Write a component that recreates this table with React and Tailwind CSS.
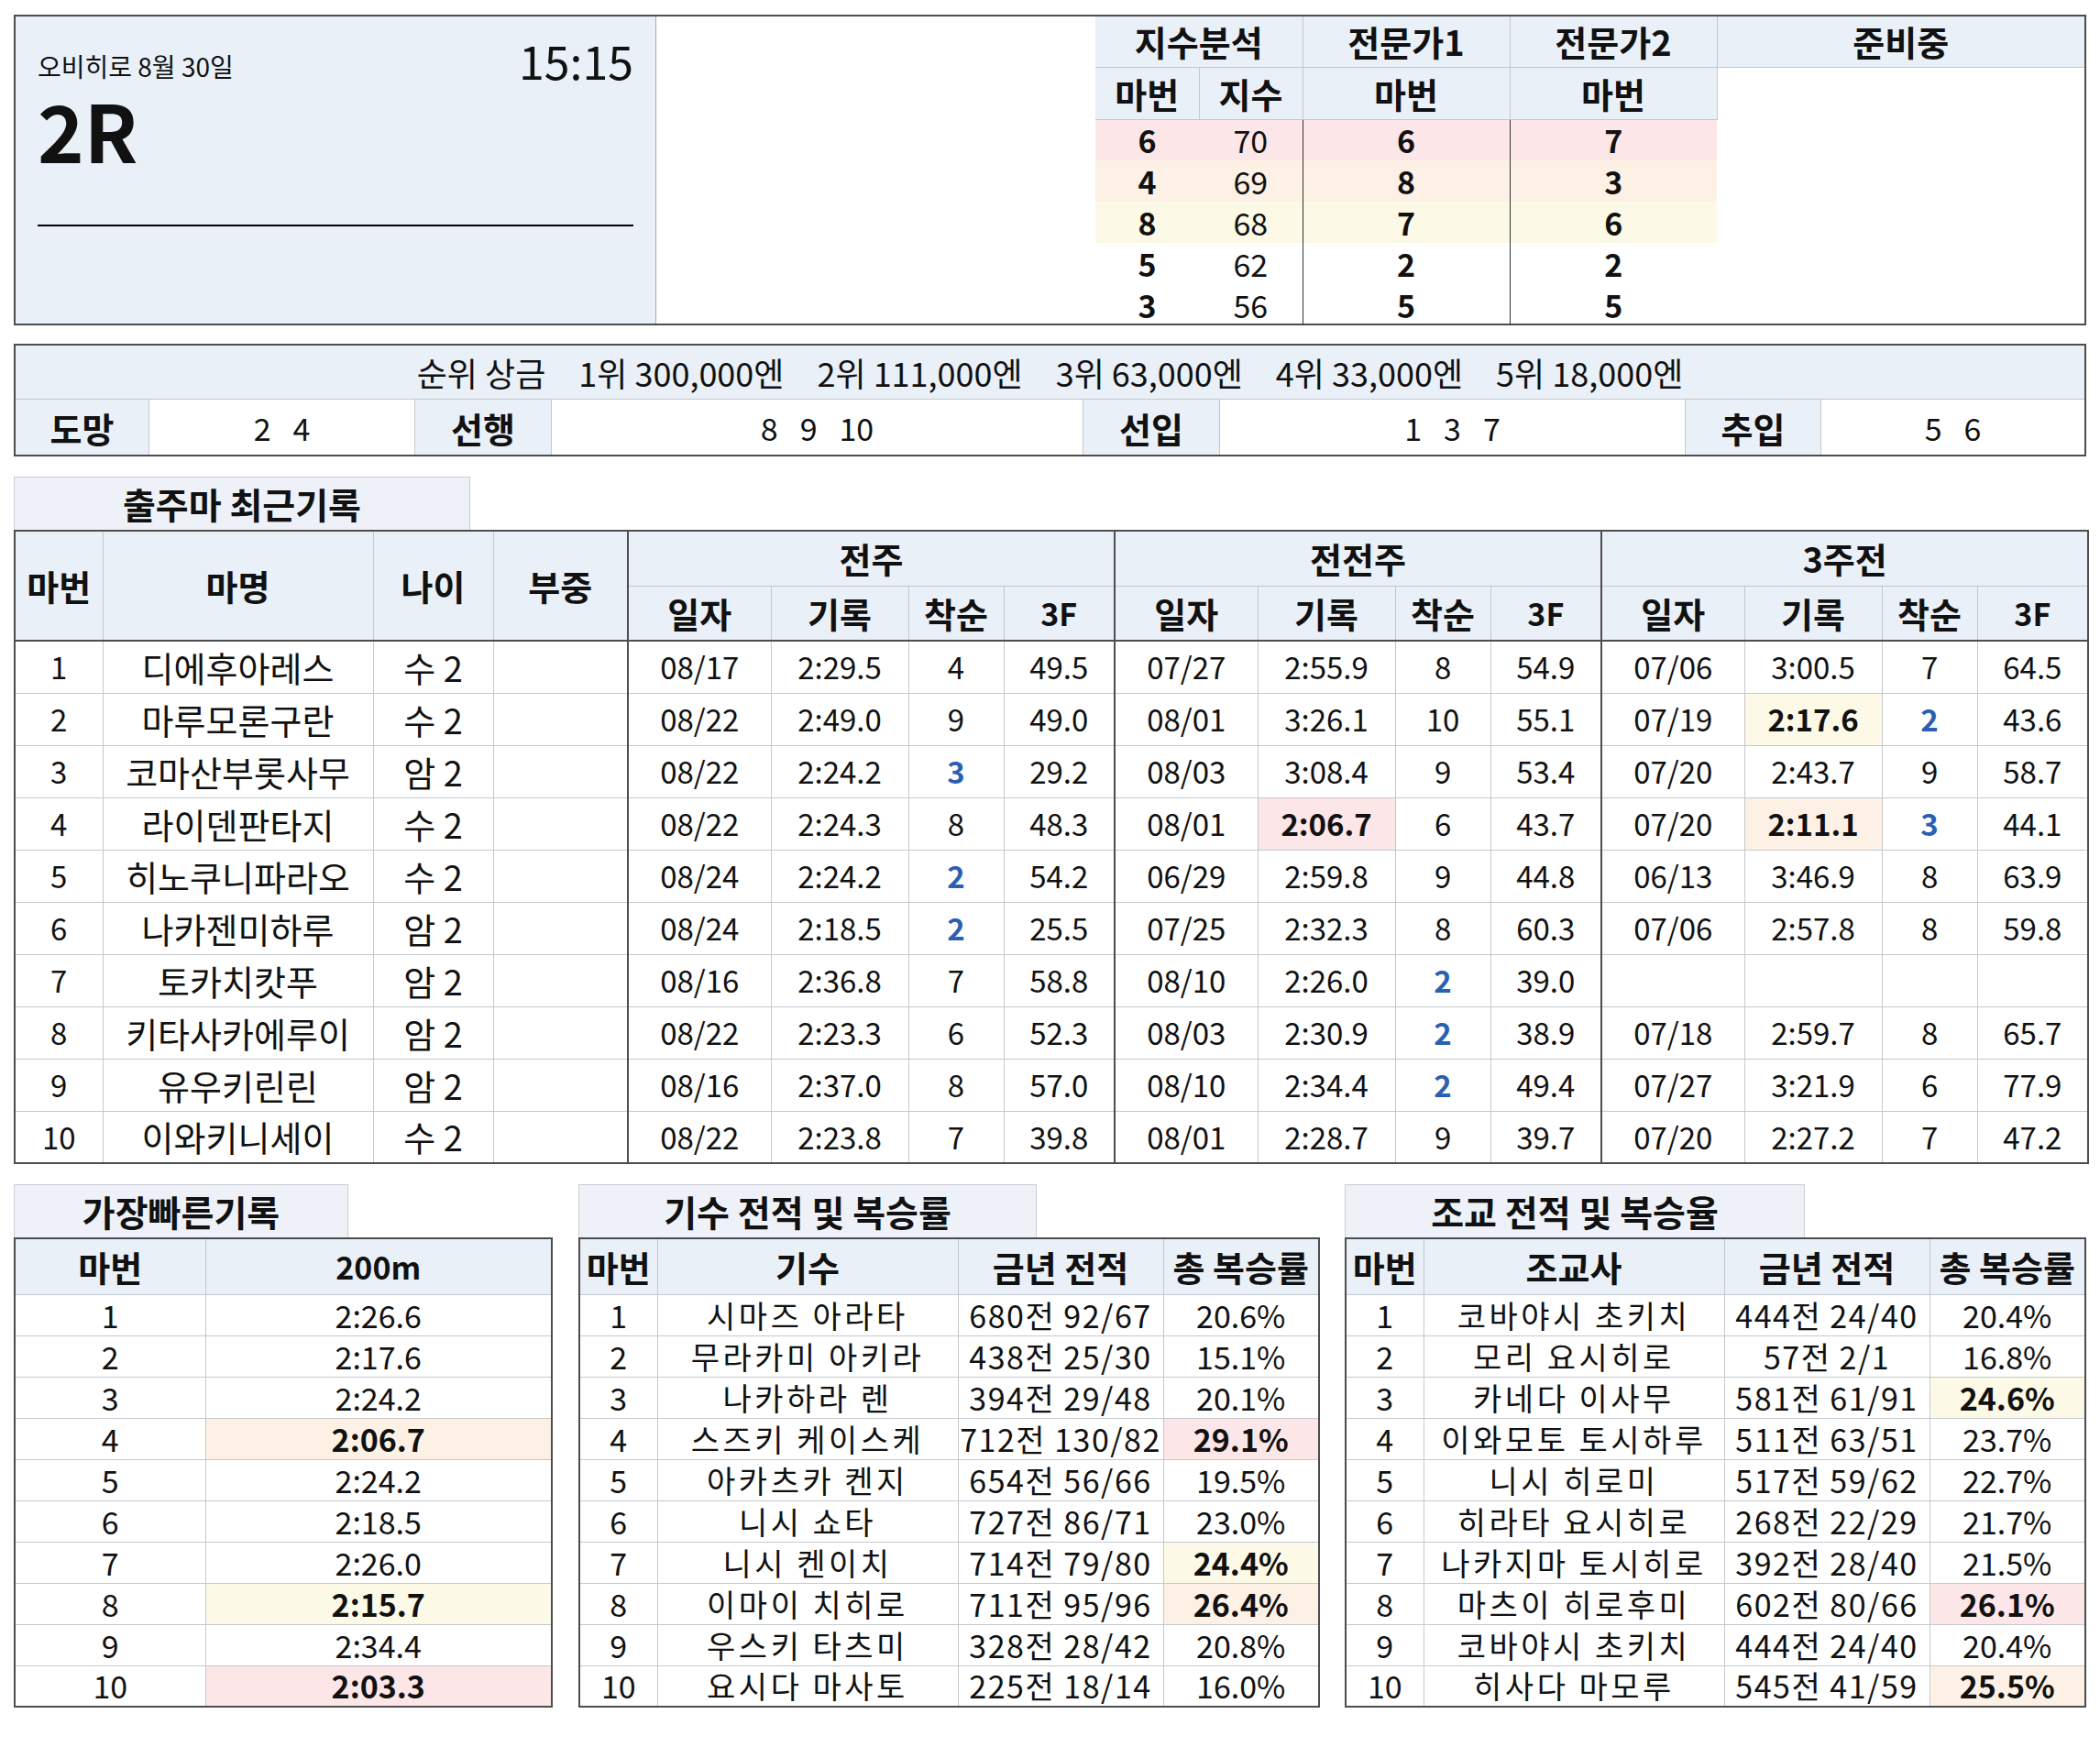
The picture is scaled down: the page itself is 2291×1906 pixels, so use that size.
import React from "react";

const HL = { p: "bg-[#fce6e7]", o: "bg-[#fdf1e5]", y: "bg-[#fdf9e7]" };

const recent = [
  { no: 1, name: "디에후아레스", age: "수 2", runs: [["08/17", "2:29.5", "4", "49.5"], ["07/27", "2:55.9", "8", "54.9"], ["07/06", "3:00.5", "7", "64.5"]] },
  { no: 2, name: "마루모론구란", age: "수 2", runs: [["08/22", "2:49.0", "9", "49.0"], ["08/01", "3:26.1", "10", "55.1"], ["07/19", "2:17.6", "2", "43.6", "y"]] },
  { no: 3, name: "코마산부롯사무", age: "암 2", runs: [["08/22", "2:24.2", "3", "29.2"], ["08/03", "3:08.4", "9", "53.4"], ["07/20", "2:43.7", "9", "58.7"]] },
  { no: 4, name: "라이덴판타지", age: "수 2", runs: [["08/22", "2:24.3", "8", "48.3"], ["08/01", "2:06.7", "6", "43.7", "p"], ["07/20", "2:11.1", "3", "44.1", "o"]] },
  { no: 5, name: "히노쿠니파라오", age: "수 2", runs: [["08/24", "2:24.2", "2", "54.2"], ["06/29", "2:59.8", "9", "44.8"], ["06/13", "3:46.9", "8", "63.9"]] },
  { no: 6, name: "나카젠미하루", age: "암 2", runs: [["08/24", "2:18.5", "2", "25.5"], ["07/25", "2:32.3", "8", "60.3"], ["07/06", "2:57.8", "8", "59.8"]] },
  { no: 7, name: "토카치캇푸", age: "암 2", runs: [["08/16", "2:36.8", "7", "58.8"], ["08/10", "2:26.0", "2", "39.0"], ["", "", "", ""]] },
  { no: 8, name: "키타사카에루이", age: "암 2", runs: [["08/22", "2:23.3", "6", "52.3"], ["08/03", "2:30.9", "2", "38.9"], ["07/18", "2:59.7", "8", "65.7"]] },
  { no: 9, name: "유우키린린", age: "암 2", runs: [["08/16", "2:37.0", "8", "57.0"], ["08/10", "2:34.4", "2", "49.4"], ["07/27", "3:21.9", "6", "77.9"]] },
  { no: 10, name: "이와키니세이", age: "수 2", runs: [["08/22", "2:23.8", "7", "39.8"], ["08/01", "2:28.7", "9", "39.7"], ["07/20", "2:27.2", "7", "47.2"]] },
];

const fastest = [
  ["2:26.6"], ["2:17.6"], ["2:24.2"], ["2:06.7", "o"], ["2:24.2"],
  ["2:18.5"], ["2:26.0"], ["2:15.7", "y"], ["2:34.4"], ["2:03.3", "p"],
];

const jockeys = [
  ["시마즈 아라타", "680전 92/67", "20.6%"],
  ["무라카미 아키라", "438전 25/30", "15.1%"],
  ["나카하라 렌", "394전 29/48", "20.1%"],
  ["스즈키 케이스케", "712전 130/82", "29.1%", "p"],
  ["아카츠카 켄지", "654전 56/66", "19.5%"],
  ["니시 쇼타", "727전 86/71", "23.0%"],
  ["니시 켄이치", "714전 79/80", "24.4%", "y"],
  ["이마이 치히로", "711전 95/96", "26.4%", "o"],
  ["우스키 타츠미", "328전 28/42", "20.8%"],
  ["요시다 마사토", "225전 18/14", "16.0%"],
];

const trainers = [
  ["코바야시 초키치", "444전 24/40", "20.4%"],
  ["모리 요시히로", "57전 2/1", "16.8%"],
  ["카네다 이사무", "581전 61/91", "24.6%", "y"],
  ["이와모토 토시하루", "511전 63/51", "23.7%"],
  ["니시 히로미", "517전 59/62", "22.7%"],
  ["히라타 요시히로", "268전 22/29", "21.7%"],
  ["나카지마 토시히로", "392전 28/40", "21.5%"],
  ["마츠이 히로후미", "602전 80/66", "26.1%", "p"],
  ["코바야시 초키치", "444전 24/40", "20.4%"],
  ["히사다 마모루", "545전 41/59", "25.5%", "o"],
];

const picks = [
  { no: "6", idx: "70", e1: "6", e2: "7", hl: "p" },
  { no: "4", idx: "69", e1: "8", e2: "3", hl: "o" },
  { no: "8", idx: "68", e1: "7", e2: "6", hl: "y" },
  { no: "5", idx: "62", e1: "2", e2: "2" },
  { no: "3", idx: "56", e1: "5", e2: "5" },
];

// 한글은 원본 폰트보다 좁게 나와서 글자 크기를 조금 키움
const th = "border border-[#c4c8ce] bg-[#eaf0f7] font-bold text-center p-0 text-[38px]";
const td = "border border-[#c4c8ce] text-center p-0";
const ko = "text-[38px] whitespace-nowrap";
const gl = "border-l-2 border-l-[#4d4d4d]";

function Tab({ w, children }) {
  return (
    <div className={`${w} h-[58px] bg-[#eef2f8] border border-b-0 border-[#c9ced6] flex items-center justify-center font-bold text-[39px] leading-none`}>
      {children}
    </div>
  );
}

function Label({ w, children }) {
  return (
    <div className={`${w} shrink-0 bg-[#eaf0f7] border-r border-[#c4c8ce] flex items-center justify-center font-bold text-[38px]`}>
      {children}
    </div>
  );
}

function Value({ w, nums, last }) {
  return (
    <div className={`${w} shrink-0 ${last ? "" : "border-r border-[#c4c8ce]"} flex items-center justify-center gap-[24px] text-[34px]`}>
      {nums.map(n => <span key={n}>{n}</span>)}
    </div>
  );
}

function StatTable({ head, rows }) {
  return (
    <table className="w-full table-fixed border-collapse border-2 border-[#4d4d4d] text-[34px] leading-none">
      <colgroup>
        <col className="w-[85px]" />
        <col className="w-[328px]" />
        <col className="w-[224px]" />
        <col />
      </colgroup>
      <thead>
        <tr className="h-[61px]">
          {head.map(h => <th key={h} className={`${th} whitespace-nowrap`}>{h}</th>)}
        </tr>
      </thead>
      <tbody>
        {rows.map((r, i) => (
          <tr key={i} className="h-[45px]">
            <td className={td}>{i + 1}</td>
            <td className={`${td} whitespace-nowrap tracking-[3.5px]`}>{r[0]}</td>
            <td className={`${td} whitespace-nowrap tracking-[1.5px]`}>{r[1]}</td>
            <td className={`${td} ${r[3] ? HL[r[3]] + " font-bold" : ""}`}>{r[2]}</td>
          </tr>
        ))}
      </tbody>
    </table>
  );
}

export default function App() {
  return (
    <div className="w-[2291px] min-h-[1906px] bg-white px-[15px] pt-[16px] pb-[40px] font-['Noto_Sans_CJK_KR','Noto_Sans',sans-serif] text-[#111]">
      {/* 상단: 경주 정보 + 예상 */}
      <div className="flex h-[339px] border-2 border-[#4d4d4d]">
        <div className="w-[699px] shrink-0 bg-[#eaf0f7] border-r border-[#a9a9a9] px-[24px] pt-[22px]">
          <div className="flex items-start justify-between h-[50px]">
            <div className="text-[28px] leading-none mt-[18px]">오비히로 8월 30일</div>
            <div className="text-[50px] leading-none">15:15</div>
          </div>
          <div className="text-[86px] font-bold leading-[64px] mt-[19px]">2R</div>
          <div className="h-[2px] bg-black mt-[72px]" />
        </div>
        <div className="w-[479px] shrink-0 bg-white" />
        <table className="flex-1 table-fixed border-collapse text-[34px] leading-none">
          <colgroup>
            <col className="w-[113px]" />
            <col className="w-[113px]" />
            <col className="w-[226px]" />
            <col className="w-[226px]" />
            <col />
          </colgroup>
          <thead>
            <tr className="h-[55px]">
              <th colSpan={2} className={`${th} border-t-0 border-l-0`}>지수분석</th>
              <th className={`${th} border-t-0`}>전문가1</th>
              <th className={`${th} border-t-0`}>전문가2</th>
              <th className={`${th} border-t-0 border-r-0`}>준비중</th>
            </tr>
            <tr className="h-[57px]">
              <th className={`${th} border-l-0`}>마번</th>
              <th className={th}>지수</th>
              <th className={th}>마번</th>
              <th className={th}>마번</th>
              <td rowSpan={6} className="border-l border-l-[#333] border-t border-t-[#c4c8ce] bg-white" />
            </tr>
          </thead>
          <tbody>
            {picks.map((r, i) => (
              <tr key={i} className={`h-[45px] ${r.hl ? HL[r.hl] : ""}`}>
                <td className="text-center font-bold p-0">{r.no}</td>
                <td className="text-center p-0">{r.idx}</td>
                <td className="text-center font-bold p-0 border-l border-[#333]">{r.e1}</td>
                <td className="text-center font-bold p-0 border-l border-[#333]">{r.e2}</td>
              </tr>
            ))}
          </tbody>
        </table>
      </div>

      {/* 상금 / 각질 */}
      <div className="mt-[20px] border-2 border-[#4d4d4d]">
        <div className="h-[59px] bg-[#eaf0f7] border-b border-[#c4c8ce] flex items-center justify-center gap-[36px] text-[36px]">
          <span>순위 상금</span>
          <span>1위 300,000엔</span>
          <span>2위 111,000엔</span>
          <span>3위 63,000엔</span>
          <span>4위 33,000엔</span>
          <span>5위 18,000엔</span>
        </div>
        <div className="flex h-[60px]">
          <Label w="w-[146px]">도망</Label>
          <Value w="w-[290px]" nums={["2", "4"]} />
          <Label w="w-[149px]">선행</Label>
          <Value w="w-[580px]" nums={["8", "9", "10"]} />
          <Label w="w-[149px]">선입</Label>
          <Value w="w-[508px]" nums={["1", "3", "7"]} />
          <Label w="w-[148px]">추입</Label>
          <Value w="flex-1" nums={["5", "6"]} last />
        </div>
      </div>

      {/* 출주마 최근기록 */}
      <div className="mt-[22px]">
        <Tab w="w-[498px]">출주마 최근기록</Tab>
        <table className="w-full table-fixed border-collapse border-2 border-[#4d4d4d] text-[33px] leading-none">
          <colgroup>
            <col className="w-[96px]" />
            <col className="w-[295px]" />
            <col className="w-[131px]" />
            <col className="w-[147px]" />
            {[0, 1, 2].map(g => (
              <React.Fragment key={g}>
                <col className="w-[156px]" />
                <col className="w-[150px]" />
                <col className="w-[104px]" />
                <col className="w-[121px]" />
              </React.Fragment>
            ))}
          </colgroup>
          <thead>
            <tr className="h-[60px]">
              <th rowSpan={2} className={`${th} border-b-2 border-b-[#4d4d4d]`}>마번</th>
              <th rowSpan={2} className={`${th} border-b-2 border-b-[#4d4d4d]`}>마명</th>
              <th rowSpan={2} className={`${th} border-b-2 border-b-[#4d4d4d]`}>나이</th>
              <th rowSpan={2} className={`${th} border-b-2 border-b-[#4d4d4d]`}>부중</th>
              <th colSpan={4} className={`${th} ${gl}`}>전주</th>
              <th colSpan={4} className={`${th} ${gl}`}>전전주</th>
              <th colSpan={4} className={`${th} ${gl}`}>3주전</th>
            </tr>
            <tr className="h-[60px]">
              {[0, 1, 2].map(g => (
                <React.Fragment key={g}>
                  <th className={`${th} ${gl} border-b-2 border-b-[#4d4d4d]`}>일자</th>
                  <th className={`${th} border-b-2 border-b-[#4d4d4d]`}>기록</th>
                  <th className={`${th} border-b-2 border-b-[#4d4d4d]`}>착순</th>
                  <th className={`${th} border-b-2 border-b-[#4d4d4d] !text-[34px]`}>3F</th>
                </React.Fragment>
              ))}
            </tr>
          </thead>
          <tbody>
            {recent.map(h => (
              <tr key={h.no} className="h-[57px]">
                <td className={td}>{h.no}</td>
                <td className={`${td} ${ko}`}>{h.name}</td>
                <td className={`${td} ${ko}`}>{h.age}</td>
                <td className={td}></td>
                {h.runs.map((r, g) => (
                  <React.Fragment key={g}>
                    <td className={`${td} ${gl}`}>{r[0]}</td>
                    <td className={`${td} ${r[4] ? HL[r[4]] + " font-bold" : ""}`}>{r[1]}</td>
                    <td className={`${td} ${r[2] === "2" || r[2] === "3" ? "text-[#2b5fb4] font-bold" : ""}`}>{r[2]}</td>
                    <td className={td}>{r[3]}</td>
                  </React.Fragment>
                ))}
              </tr>
            ))}
          </tbody>
        </table>
      </div>

      {/* 하단 3개 표 */}
      <div className="mt-[22px] flex items-start">
        <div className="w-[588px] shrink-0">
          <Tab w="w-[365px]">가장빠른기록</Tab>
          <table className="w-full table-fixed border-collapse border-2 border-[#4d4d4d] text-[34px] leading-none">
            <colgroup>
              <col className="w-[208px]" />
              <col />
            </colgroup>
            <thead>
              <tr className="h-[61px]">
                <th className={th}>마번</th>
                <th className={`${th} !text-[34px]`}>200m</th>
              </tr>
            </thead>
            <tbody>
              {fastest.map((r, i) => (
                <tr key={i} className="h-[45px]">
                  <td className={td}>{i + 1}</td>
                  <td className={`${td} ${r[1] ? HL[r[1]] + " font-bold" : ""}`}>{r[0]}</td>
                </tr>
              ))}
            </tbody>
          </table>
        </div>
        <div className="w-[809px] shrink-0 ml-[28px]">
          <Tab w="w-[500px]">기수 전적 및 복승률</Tab>
          <StatTable head={["마번", "기수", "금년 전적", "총 복승률"]} rows={jockeys} />
        </div>
        <div className="flex-1 ml-[27px]">
          <Tab w="w-[502px]">조교 전적 및 복승율</Tab>
          <StatTable head={["마번", "조교사", "금년 전적", "총 복승률"]} rows={trainers} />
        </div>
      </div>
    </div>
  );
}
